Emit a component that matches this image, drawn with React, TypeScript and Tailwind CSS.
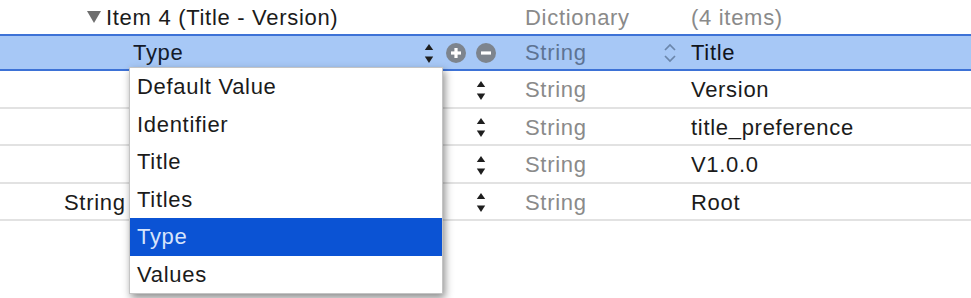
import React from "react";

const font = { fontFamily: '"Liberation Sans", Arial, Helvetica, sans-serif' };

function Stepper() {
  return (
    <svg width="10" height="24" viewBox="0 0 10 24" className="shrink-0">
      <path d="M5 3 L9.2 9 L0.8 9 Z" fill="#1e1e1e" />
      <path d="M0.8 15.5 L9.2 15.5 L5 22 Z" fill="#1e1e1e" />
    </svg>
  );
}

function CircleBtn({ plus }: { plus?: boolean }) {
  return (
    <svg width="20" height="20" viewBox="0 0 20 20" className="shrink-0">
      <circle cx="10" cy="10" r="10" fill="#7d848d" />
      <line x1="5" y1="10" x2="15" y2="10" stroke="#ffffff" strokeWidth="3.2" />
      {plus && <line x1="10" y1="5" x2="10" y2="15" stroke="#ffffff" strokeWidth="3.2" />}
    </svg>
  );
}

function Chevrons() {
  return (
    <svg width="14" height="22" viewBox="0 0 14 22" className="shrink-0">
      <path d="M2 8 L7 3 L12 8" fill="none" stroke="#6b86ab" strokeWidth="1.7" />
      <path d="M2 14 L7 19 L12 14" fill="none" stroke="#6b86ab" strokeWidth="1.7" />
    </svg>
  );
}

const rows = [
  { key: "", keyPad: "pl-[133px]", value: "Version" },
  { key: "", keyPad: "pl-[133px]", value: "title_preference" },
  { key: "", keyPad: "pl-[133px]", value: "V1.0.0" },
  { key: "String", keyPad: "pl-[64px]", value: "Root" },
];

const menuItems = ["Default Value", "Identifier", "Title", "Titles", "Type", "Values"];

export default function App() {
  return (
    <div
      className="relative w-[971px] h-[298px] bg-white overflow-hidden text-[22px] tracking-[0.7px] text-[#1b1b1b]"
      style={font}
    >
      {/* Row 0 */}
      <div className="flex items-center h-[34px]">
        <div className="w-[525px] flex items-center pl-[87px] gap-[5px]">
          <svg width="14" height="12" viewBox="0 0 14 12" className="shrink-0">
            <path d="M0 0 L14 0 L7 12 Z" fill="#6e6e6e" />
          </svg>
          <span>Item 4 (Title - Version)</span>
        </div>
        <div className="w-[166px] text-[#8a8a8a]">Dictionary</div>
        <div className="flex-1 text-[#8a8a8a]">(4 items)</div>
      </div>

      {/* Selected row */}
      <div className="flex items-center h-[37px] bg-[#a7c8f6] border-y-2 border-[#3d72d6]">
        <div className="w-[525px] flex items-center pl-[133px] pr-[29px]">
          <span className="text-[#141a2a]">Type</span>
          <div className="ml-auto flex items-center">
            <Stepper />
            <div className="ml-[12px]">
              <CircleBtn plus />
            </div>
            <div className="ml-[10px]">
              <CircleBtn />
            </div>
          </div>
        </div>
        <div className="w-[166px] flex items-center pr-[14px]">
          <span className="text-[#5d7393]">String</span>
          <div className="ml-auto">
            <Chevrons />
          </div>
        </div>
        <div className="flex-1 text-[#10141c]">Title</div>
      </div>

      {/* Other rows */}
      {rows.map((r) => (
        <div key={r.value} className="flex items-center h-[37.5px] pt-[2px] border-b-2 border-[#e2e2e2]">
          <div className={`w-[525px] flex items-center ${r.keyPad} pr-[39px]`}>
            <span>{r.key}</span>
            <div className="ml-auto">
              <Stepper />
            </div>
          </div>
          <div className="w-[166px] text-[#8a8a8a]">String</div>
          <div className="flex-1">{r.value}</div>
        </div>
      ))}

      {/* Popup menu */}
      <div className="absolute left-[129px] top-[67px] w-[314px] bg-white border border-[#c4c4c4] shadow-[2px_4px_8px_rgba(0,0,0,0.45)]">
        {menuItems.map((m) => (
          <div
            key={m}
            className={`h-[37.5px] flex items-center pl-[7px] ${
              m === "Type" ? "bg-[#0b53d4] text-[#d7e4fb]" : "text-[#1b1b1b]"
            }`}
          >
            {m}
          </div>
        ))}
      </div>
    </div>
  );
}
